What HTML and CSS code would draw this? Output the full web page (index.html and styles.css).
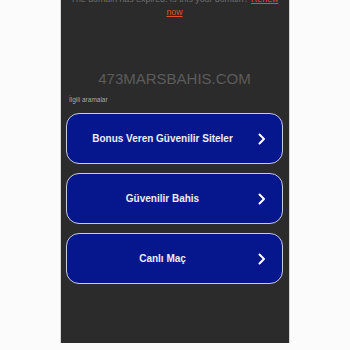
FILE: index.html
```
<!DOCTYPE html>
<html>
<head>
<meta charset="utf-8">
<link rel="stylesheet" href="styles.css">
</head>
<body>
<div class="panel">
  <p class="notice">The domain has expired. Is this your domain? <a href="#" class="renew">Renew now</a></p>
  <h1 class="domain">473MARSBAHIS.COM</h1>
  <div class="related">İlgili aramalar</div>
  <div class="list">
    <a href="#" class="item"><span class="label">Bonus Veren Güvenilir Siteler</span><svg class="chev" width="8" height="12" viewBox="0 0 8 12"><path d="M1.5 1.5 L6 6 L1.5 10.5" fill="none" stroke="#fff" stroke-width="2" stroke-linecap="round" stroke-linejoin="round"/></svg></a>
    <a href="#" class="item"><span class="label">Güvenilir Bahis</span><svg class="chev" width="8" height="12" viewBox="0 0 8 12"><path d="M1.5 1.5 L6 6 L1.5 10.5" fill="none" stroke="#fff" stroke-width="2" stroke-linecap="round" stroke-linejoin="round"/></svg></a>
    <a href="#" class="item"><span class="label">Canlı Maç</span><svg class="chev" width="8" height="12" viewBox="0 0 8 12"><path d="M1.5 1.5 L6 6 L1.5 10.5" fill="none" stroke="#fff" stroke-width="2" stroke-linecap="round" stroke-linejoin="round"/></svg></a>
  </div>
</div>
</body>
</html>
```
FILE: styles.css
```
html, body {
  margin: 0;
  padding: 0;
  background: #fbfbfb;
  height: 100%;
  overflow: hidden;
}
body {
  font-family: "Liberation Sans", Arial, sans-serif;
}
.panel {
  width: 230px;
  margin: 0 auto;
  min-height: 100%;
  background: #2b2b2b;
  border-left: 1px solid #d6d6d6;
  border-right: 1px solid #d6d6d6;
  padding: 0 6px 0 5px;
  box-sizing: border-box;
}
.notice {
  margin: -7px 0 0;
  padding: 0 4px;
  font-size: 8.8px;
  line-height: 13px;
  color: #6e6e6e;
  text-align: center;
}
.renew {
  color: #d9532b;
}
.domain {
  margin: 51px 0 0;
  font-size: 15px;
  font-weight: normal;
  line-height: 18px;
  color: #5c5c5c;
  text-align: center;
}
.related {
  margin: 7px 0 0 3px;
  font-size: 6.5px;
  line-height: 9px;
  color: #a8a8a8;
}
.list {
  margin-top: 9px;
  display: flex;
  flex-direction: column;
  gap: 9px;
}
.item {
  display: flex;
  align-items: center;
  height: 51px;
  box-sizing: border-box;
  background: #06168c;
  border: 1.5px solid #c9cbdc;
  border-radius: 13px;
  text-decoration: none;
  padding-right: 16px;
}
.label {
  flex: 1;
  text-align: center;
  color: #ececf4;
  font-size: 10px;
  font-weight: bold;
}
.chev {
  display: block;
}
```
